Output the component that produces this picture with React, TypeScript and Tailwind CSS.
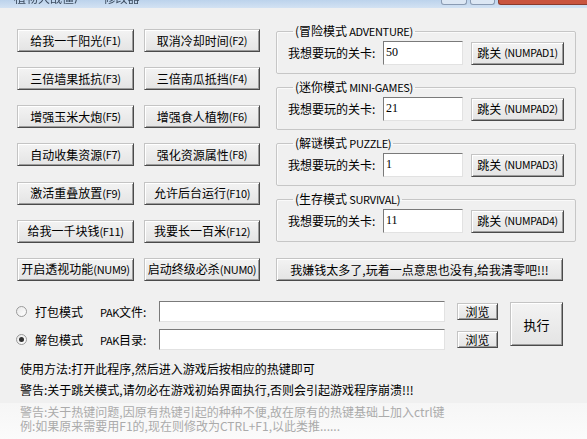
import type { ReactNode } from 'react'

const font = { fontFamily: '"Noto Sans CJK SC", "Liberation Sans", sans-serif' }

const hotkeys: [string, string][] = [
  ['给我一千阳光(F1)', '取消冷却时间(F2)'],
  ['三倍墙果抵抗(F3)', '三倍南瓜抵挡(F4)'],
  ['增强玉米大炮(F5)', '增强食人植物(F6)'],
  ['自动收集资源(F7)', '强化资源属性(F8)'],
  ['激活重叠放置(F9)', '允许后台运行(F10)'],
  ['给我一千块钱(F11)', '我要长一百米(F12)'],
  ['开启透视功能(NUM9)', '启动终级必杀(NUM0)'],
]

const modes = [
  { title: '(冒险模式 ADVENTURE)', level: '50', key: 'NUMPAD1' },
  { title: '(迷你模式 MINI-GAMES)', level: '21', key: 'NUMPAD2' },
  { title: '(解谜模式 PUZZLE)', level: '1', key: 'NUMPAD3' },
  { title: '(生存模式 SURVIVAL)', level: '11', key: 'NUMPAD4' },
]

// the original uses SimSun, whose latin glyphs are half width; shrink the ascii runs a bit
function Mixed({ text }: { text: string }) {
  const parts = text.split(/([A-Za-z0-9()\- ]{2,})/)
  return (
    <>
      {parts.map((p, i) =>
        i % 2 === 1 ? (
          <span key={i} className="text-[11px] tracking-[-0.3px]">
            {p}
          </span>
        ) : (
          p
        ),
      )}
    </>
  )
}

function WinButton({ children, className = '' }: { children: ReactNode; className?: string }) {
  return (
    <button
      type="button"
      className={`flex items-center justify-center whitespace-nowrap border border-t-[#c4c4c4] border-l-[#c4c4c4] border-r-[#4a4a4a] border-b-[#4a4a4a] bg-gradient-to-b from-[#f3f3f3] to-[#e4e4e4] text-[12px] leading-none text-black shadow-[inset_1px_1px_0_#ffffff,inset_-1px_-1px_0_#9c9c9c] ${className}`}
    >
      {children}
    </button>
  )
}

function SunkenBox({ value, className = '' }: { value?: string; className?: string }) {
  return (
    <div
      className={`border border-t-[#7a7a7a] border-l-[#7a7a7a] border-r-[#e2e2e2] border-b-[#e2e2e2] bg-white px-[2px] pt-[3px] text-[12px] leading-[14px] text-black ${className}`}
      style={{ fontFamily: '"Liberation Serif", serif' }}
    >
      {value}
    </div>
  )
}

function Radio({ checked, label }: { checked?: boolean; label: string }) {
  return (
    <div className="flex items-center whitespace-nowrap">
      <span className="ml-[16px] flex h-[11px] w-[11px] items-center justify-center rounded-full border border-[#9a9a9a] bg-gradient-to-br from-[#e8e8e8] to-white">
        {checked && <span className="h-[5px] w-[5px] rounded-full bg-[#303030]" />}
      </span>
      <span className="ml-[8px] text-[12px] text-black">{label}</span>
    </div>
  )
}

export default function App() {
  return (
    <div className="flex h-[439px] w-[587px] flex-col overflow-hidden bg-[#f0f0f0]" style={font}>
      {/* title bar, mostly cut off */}
      <div className="relative flex h-[8px] shrink-0 items-start overflow-hidden bg-gradient-to-b from-[#bcd3ec] to-[#d3e2f3]">
        <span className="ml-[14px] mt-[-9px] text-[12px] leading-[14px] text-[#3a4a5e] blur-[0.6px]">
          植物大战僵尸 · 修改器
        </span>
        <div className="ml-auto flex h-[5px] items-start gap-[3px]">
          <span className="h-[5px] w-[26px] rounded-b-[3px] border border-t-0 border-[#8a9bb3] bg-[#dce7f4]" />
          <span className="h-[5px] w-[25px] rounded-b-[3px] border border-t-0 border-[#8a9bb3] bg-[#dce7f4]" />
          <span className="h-[5px] w-[89px] rounded-bl-[3px] border border-t-0 border-r-0 border-[#8b3a2c] bg-[#c9543f]" />
        </div>
      </div>

      <div className="flex">
        <div className="ml-[17px] mt-[21px] grid grid-cols-[117px_116px] gap-x-[10px] gap-y-[15px]">
          {hotkeys.flat().map((label) => (
            <WinButton key={label} className="h-[23px]">
              <Mixed text={label} />
            </WinButton>
          ))}
        </div>

        <div className="ml-[16px] mt-[17px] flex w-[296px] flex-col gap-[7px]">
          {modes.map((m) => (
            <fieldset
              key={m.key}
              className="rounded-[2px] border border-[#c6c6c6] px-[11px] pb-[8px] shadow-[inset_1px_1px_0_#fafafa]"
            >
              <legend className="ml-[5px] px-[2px] text-[12px] leading-[12px] text-black">
                <Mixed text={m.title} />
              </legend>
              <div className="mt-[4px] flex items-center">
                <span className="w-[95px] whitespace-nowrap text-[12px] text-black">我想要玩的关卡:</span>
                <SunkenBox value={m.level} className="h-[24px] w-[80px]" />
                <WinButton className="ml-[8px] h-[23px] w-[93px]">
                  跳关<span className="ml-[3px] text-[10.5px] tracking-[-0.3px]">({m.key})</span>
                </WinButton>
              </div>
            </fieldset>
          ))}
          <WinButton className="mt-[9px] h-[23px] w-[287px]">我嫌钱太多了,玩着一点意思也没有,给我清零吧!!!</WinButton>
        </div>
      </div>

      <div className="mt-[20px] flex">
        <div className="flex flex-col gap-[7px]">
          <div className="flex h-[21px] items-center">
            <div className="w-[100px]">
              <Radio label="打包模式" />
            </div>
            <span className="w-[59px] whitespace-nowrap text-[12px] text-black">
              <span className="text-[11px] tracking-[-0.4px]">PAK</span>文件:
            </span>
            <SunkenBox className="h-[21px] w-[286px]" />
            <WinButton className="ml-[12px] h-[17px] w-[41px]">浏览</WinButton>
          </div>
          <div className="flex h-[21px] items-center">
            <div className="w-[100px]">
              <Radio checked label="解包模式" />
            </div>
            <span className="w-[59px] whitespace-nowrap text-[12px] text-black">
              <span className="text-[11px] tracking-[-0.4px]">PAK</span>目录:
            </span>
            <SunkenBox className="h-[21px] w-[286px]" />
            <WinButton className="ml-[12px] h-[17px] w-[41px]">浏览</WinButton>
          </div>
        </div>
        <WinButton className="ml-[12px] mt-[1px] h-[44px] w-[53px] text-[13px]">执行</WinButton>
      </div>

      <div className="ml-[20px] mt-[8px] text-[12px] leading-[21px] text-black">
        <p>使用方法:打开此程序,然后进入游戏后按相应的热键即可</p>
        <p>警告:关于跳关模式,请勿必在游戏初始界面执行,否则会引起游戏程序崩溃!!!</p>
      </div>

      <div className="mt-[3px] flex-1 bg-gradient-to-b from-[#f6f6f6] to-[#fbfbfb] pl-[20px] pt-[2px] text-[12px] leading-[14px] text-[#ababab]">
        <p>警告:关于热键问题,因原有热键引起的种种不便,故在原有的热键基础上加入ctrl键</p>
        <p>例:如果原来需要用F1的,现在则修改为CTRL+F1,以此类推......</p>
      </div>
    </div>
  )
}
